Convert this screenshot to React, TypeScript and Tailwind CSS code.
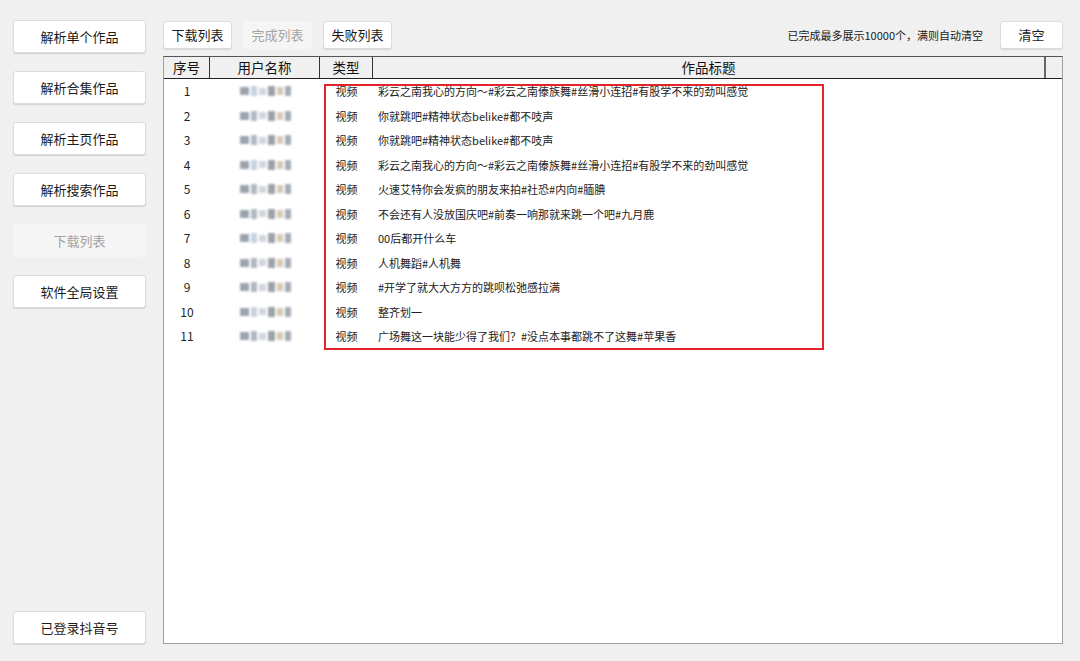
import React from "react";

const rows = [
  "彩云之南我心的方向～#彩云之南傣族舞#丝滑小连招#有股学不来的劲叫感觉",
  "你就跳吧#精神状态belike#都不吱声",
  "你就跳吧#精神状态belike#都不吱声",
  "彩云之南我心的方向～#彩云之南傣族舞#丝滑小连招#有股学不来的劲叫感觉",
  "火速艾特你会发疯的朋友来拍#社恐#内向#腼腆",
  "不会还有人没放国庆吧#前奏一响那就来跳一个吧#九月鹿",
  "00后都开什么车",
  "人机舞蹈#人机舞",
  "#开学了就大大方方的跳呗松弛感拉满",
  "整齐划一",
  "广场舞这一块能少得了我们？#没点本事都跳不了这舞#苹果香",
];

const font = { fontFamily: '"Microsoft YaHei", "Noto Sans CJK SC", "Noto Sans", sans-serif' };

function SideBtn({ label, disabled }: { label: string; disabled?: boolean }) {
  return (
    <div
      className={
        "h-[33px] w-[133px] rounded-[3px] flex items-center justify-center text-[13px] " +
        (disabled
          ? "bg-[#f5f5f5] text-[#a3a3a3]"
          : "bg-white text-[#1a1a1a] border border-[#dcdcdc] shadow-[0_1px_1px_rgba(0,0,0,0.12)]")
      }
    >
      {label}
    </div>
  );
}

function TopBtn({ label, disabled, w = "w-[69px]" }: { label: string; disabled?: boolean; w?: string }) {
  return (
    <div
      className={
        w +
        " h-[28px] rounded-[3px] flex items-center justify-center text-[13px] " +
        (disabled
          ? "bg-[#f5f5f5] text-[#a3a3a3]"
          : "bg-white text-[#1a1a1a] border border-[#dcdcdc] shadow-[0_1px_1px_rgba(0,0,0,0.1)]")
      }
    >
      {label}
    </div>
  );
}

function Blurred({ i }: { i: number }) {
  const a = i % 3;
  return (
    <div className="flex items-center gap-[2px] blur-[1.3px] opacity-75">
      <span className="w-[9px] h-[8px] bg-[#7d8592]" />
      <span className={"w-[6px] h-[10px] " + (a === 0 ? "bg-[#b4c4d8]" : "bg-[#98a2b0]")} />
      <span className="w-[7px] h-[7px] bg-[#c3c7cd]" />
      <span className="w-[7px] h-[10px] bg-[#7b8290]" />
      <span className="w-[6px] h-[8px] bg-[#c9b79a]" />
      <span className="w-[6px] h-[10px] bg-[#8891a0]" />
    </div>
  );
}

export default function App() {
  return (
    <div className="w-[1080px] h-[661px] bg-[#f0f0f0] flex overflow-hidden" style={font}>
      <div className="w-[163px] shrink-0 flex flex-col pl-[13px] pt-[20px] pb-[17px]">
        <div className="flex flex-col gap-[18px]">
          <SideBtn label="解析单个作品" />
          <SideBtn label="解析合集作品" />
          <SideBtn label="解析主页作品" />
          <SideBtn label="解析搜索作品" />
          <SideBtn label="下载列表" disabled />
          <SideBtn label="软件全局设置" />
        </div>
        <div className="mt-auto">
          <SideBtn label="已登录抖音号" />
        </div>
      </div>
      <div className="flex-1 flex flex-col pt-[21px] pr-[17px] pb-[17px]">
        <div className="flex items-center h-[28px]">
          <div className="flex gap-[11px]">
            <TopBtn label="下载列表" />
            <TopBtn label="完成列表" disabled />
            <TopBtn label="失败列表" />
          </div>
          <div className="ml-auto text-[11px] text-[#1a1a1a] mr-[17px]">已完成最多展示10000个，满则自动清空</div>
          <TopBtn label="清空" w="w-[63px]" />
        </div>
        <div className="relative mt-[7px] flex-1 bg-white border border-[#a0a0a0] border-t-[#555] flex flex-col">
          <div className="flex h-[22px] bg-[#f0f0f0] border-b border-[#222] text-[13.5px] text-[#111]">
            <div className="w-[46px] flex items-center justify-center border-r border-[#333]">序号</div>
            <div className="w-[110px] flex items-center justify-center border-r border-[#333]">用户名称</div>
            <div className="w-[53px] flex items-center justify-center border-r border-[#333]">类型</div>
            <div className="w-[673px] flex items-center justify-center border-r-[2px] border-[#666]">作品标题</div>
            <div className="flex-1" />
          </div>
          <div className="flex flex-col text-[11px] text-[#222]">
            {rows.map((t, i) => (
              <div key={i} className="flex h-[24.5px] items-center">
                <div className="w-[46px] text-center text-[12px]">{i + 1}</div>
                <div className="w-[110px] flex justify-center">
                  <Blurred i={i} />
                </div>
                <div className="w-[53px] text-center">视频</div>
                <div className="pl-[5px] whitespace-nowrap">{t}</div>
              </div>
            ))}
          </div>
          <div className="absolute left-[160px] top-[27px] w-[500px] h-[266px] border-2 border-[#e3242b] pointer-events-none" />
        </div>
      </div>
    </div>
  );
}
